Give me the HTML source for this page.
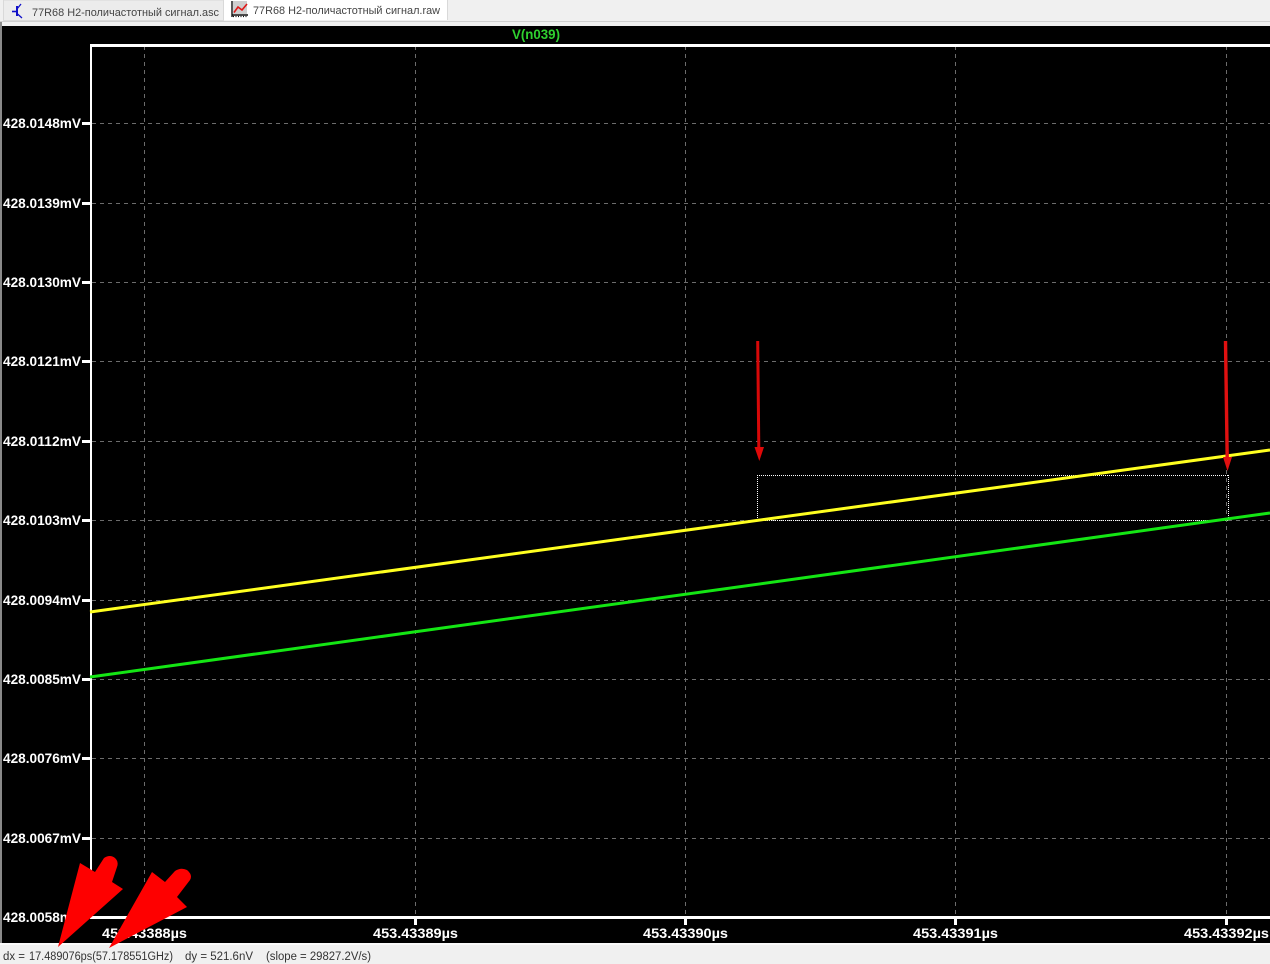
<!DOCTYPE html>
<html><head><meta charset="utf-8"><style>
html,body{margin:0;padding:0;width:1270px;height:964px;overflow:hidden;background:#f0f0f0}
svg{display:block}
</style></head><body>
<svg xmlns="http://www.w3.org/2000/svg" width="1270" height="964" viewBox="0 0 1270 964">
<rect width="1270" height="964" fill="#f0f0f0"/>
<!-- tabs -->
<rect x="3.5" y="0" width="220" height="20.5" fill="#ececec" stroke="#d9d9d9"/>
<rect x="224" y="0" width="223" height="20" fill="#ffffff"/>
<rect x="447" y="0" width="1" height="20" fill="#d9d9d9"/>
<rect x="0" y="21" width="1270" height="1" fill="#cfcfcf"/>
<path d="M12 11.5H16" stroke="#1010c8" stroke-width="1.6" fill="none"/>
<path d="M17 6V16" stroke="#1010c8" stroke-width="2" fill="none"/>
<path d="M17 9L21 4M17 13.5L22 18" stroke="#1010c8" stroke-width="1.3" fill="none"/>
<rect x="233" y="1" width="14" height="13" fill="#cfcfcf"/>
<path d="M234 12.5L238 7L242 10L247 4" stroke="#e01818" stroke-width="1.6" fill="none"/>
<path d="M232 1V17M232 15H248" stroke="#111" stroke-width="1.4" fill="none"/>
<path d="M233 16.5H248" stroke="#111" stroke-width="1.2" stroke-dasharray="1 1.5" fill="none"/>
<text x="32" y="16" font-family="'Liberation Sans',sans-serif" font-size="11" fill="#444" textLength="187" lengthAdjust="spacingAndGlyphs">77R68 H2-поличастотный сигнал.asc</text>
<text x="253" y="14" font-family="'Liberation Sans',sans-serif" font-size="11" fill="#444" textLength="187" lengthAdjust="spacingAndGlyphs">77R68 H2-поличастотный сигнал.raw</text>
<!-- plot background -->
<rect x="0" y="22" width="2" height="922" fill="#8a8a8a"/>
<rect x="2" y="26" width="1268" height="917" fill="#000"/>
<!-- grid -->
<g stroke="#6c6c6c" stroke-width="1" stroke-dasharray="4 4" fill="none" shape-rendering="crispEdges">
<path d="M144.5 46V916M415.5 46V916M685.5 46V916M955.5 46V916M1226.5 46V916"/>
<path d="M92 123.5H1270M92 203.5H1270M92 282.5H1270M92 361.5H1270M92 441.5H1270M92 520.5H1270M92 600.5H1270M92 679.5H1270M92 758.5H1270M92 838.5H1270"/>
</g>
<!-- frame -->
<g fill="#fff" shape-rendering="crispEdges">
<rect x="90" y="44" width="1180" height="3"/>
<rect x="90" y="44" width="2" height="875"/>
<rect x="90" y="916" width="1180" height="3"/>
<rect x="82" y="122" width="8" height="3"/><rect x="82" y="202" width="8" height="3"/><rect x="82" y="281" width="8" height="3"/><rect x="82" y="360" width="8" height="3"/><rect x="82" y="440" width="8" height="3"/><rect x="82" y="519" width="8" height="3"/><rect x="82" y="599" width="8" height="3"/><rect x="82" y="678" width="8" height="3"/><rect x="82" y="757" width="8" height="3"/><rect x="82" y="837" width="8" height="3"/>
<rect x="143" y="919" width="3" height="6"/><rect x="414" y="919" width="3" height="6"/><rect x="684" y="919" width="3" height="6"/><rect x="954" y="919" width="3" height="6"/><rect x="1225" y="919" width="3" height="6"/>
</g>
<!-- labels -->
<g font-family="'Liberation Sans',sans-serif" font-size="14" font-weight="bold" fill="#fff">
<text x="3" y="128" textLength="78" lengthAdjust="spacingAndGlyphs">428.0148mV</text>
<text x="3" y="208" textLength="78" lengthAdjust="spacingAndGlyphs">428.0139mV</text>
<text x="3" y="287" textLength="78" lengthAdjust="spacingAndGlyphs">428.0130mV</text>
<text x="3" y="366" textLength="78" lengthAdjust="spacingAndGlyphs">428.0121mV</text>
<text x="3" y="446" textLength="78" lengthAdjust="spacingAndGlyphs">428.0112mV</text>
<text x="3" y="525" textLength="78" lengthAdjust="spacingAndGlyphs">428.0103mV</text>
<text x="3" y="605" textLength="78" lengthAdjust="spacingAndGlyphs">428.0094mV</text>
<text x="3" y="684" textLength="78" lengthAdjust="spacingAndGlyphs">428.0085mV</text>
<text x="3" y="763" textLength="78" lengthAdjust="spacingAndGlyphs">428.0076mV</text>
<text x="3" y="843" textLength="78" lengthAdjust="spacingAndGlyphs">428.0067mV</text>
<text x="3" y="922" textLength="78" lengthAdjust="spacingAndGlyphs">428.0058mV</text>
<text x="102" y="938" textLength="85" lengthAdjust="spacingAndGlyphs">453.43388µs</text>
<text x="373" y="938" textLength="85" lengthAdjust="spacingAndGlyphs">453.43389µs</text>
<text x="643" y="938" textLength="85" lengthAdjust="spacingAndGlyphs">453.43390µs</text>
<text x="913" y="938" textLength="85" lengthAdjust="spacingAndGlyphs">453.43391µs</text>
<text x="1184" y="938" textLength="85" lengthAdjust="spacingAndGlyphs">453.43392µs</text>
</g>
<text x="512" y="39" font-family="'Liberation Sans',sans-serif" font-size="14" font-weight="bold" fill="#2fd02f" textLength="48" lengthAdjust="spacingAndGlyphs">V(n039)</text>
<!-- selection box -->
<g stroke="#fff" stroke-width="1" stroke-dasharray="1 1" fill="none" shape-rendering="crispEdges">
<path d="M757 475.5H1229M757 520.5H1229M757.5 475V521M1228.5 475V521"/>
</g>
<!-- traces -->
<line x1="90" y1="612" x2="1270" y2="450" stroke="#ffff20" stroke-width="3"/>
<line x1="90" y1="677" x2="1270" y2="513" stroke="#14e614" stroke-width="3"/>
<!-- small red arrows -->
<path d="M757.7 341L758.8 448" stroke="#d80808" stroke-width="3" fill="none"/>
<path d="M754.5 447H764L759.3 461Z" fill="#e00808"/>
<path d="M1225.5 341L1227.2 458" stroke="#e01010" stroke-width="3.4" fill="none"/>
<path d="M1223 457H1232L1227.5 471Z" fill="#e01010"/>
<!-- status bar -->
<rect x="0" y="943" width="1270" height="2" fill="#fafafa"/>
<rect x="0" y="945" width="1270" height="19" fill="#f0f0f0"/>
<g font-family="'Liberation Sans',sans-serif" font-size="11.5" fill="#333">
<text x="3" y="960" textLength="22" lengthAdjust="spacingAndGlyphs">dx =</text>
<text x="29" y="960" textLength="144" lengthAdjust="spacingAndGlyphs">17.489076ps(57.178551GHz)</text>
<text x="185" y="960" textLength="68" lengthAdjust="spacingAndGlyphs">dy = 521.6nV</text>
<text x="266" y="960" textLength="105" lengthAdjust="spacingAndGlyphs">(slope = 29827.2V/s)</text>
</g>
<!-- large red arrows -->
<path d="M58 947L80 863L95 872L104 858Q110 854 115 858Q119 862 117 867L112 882L123 889Z" fill="#fe0000"/>
<path d="M109 948L152 872L165 882L175 871Q181 867 187 870Q193 875 190 880L177 897L187 907Z" fill="#fe0000"/>
</svg>
</body></html>
